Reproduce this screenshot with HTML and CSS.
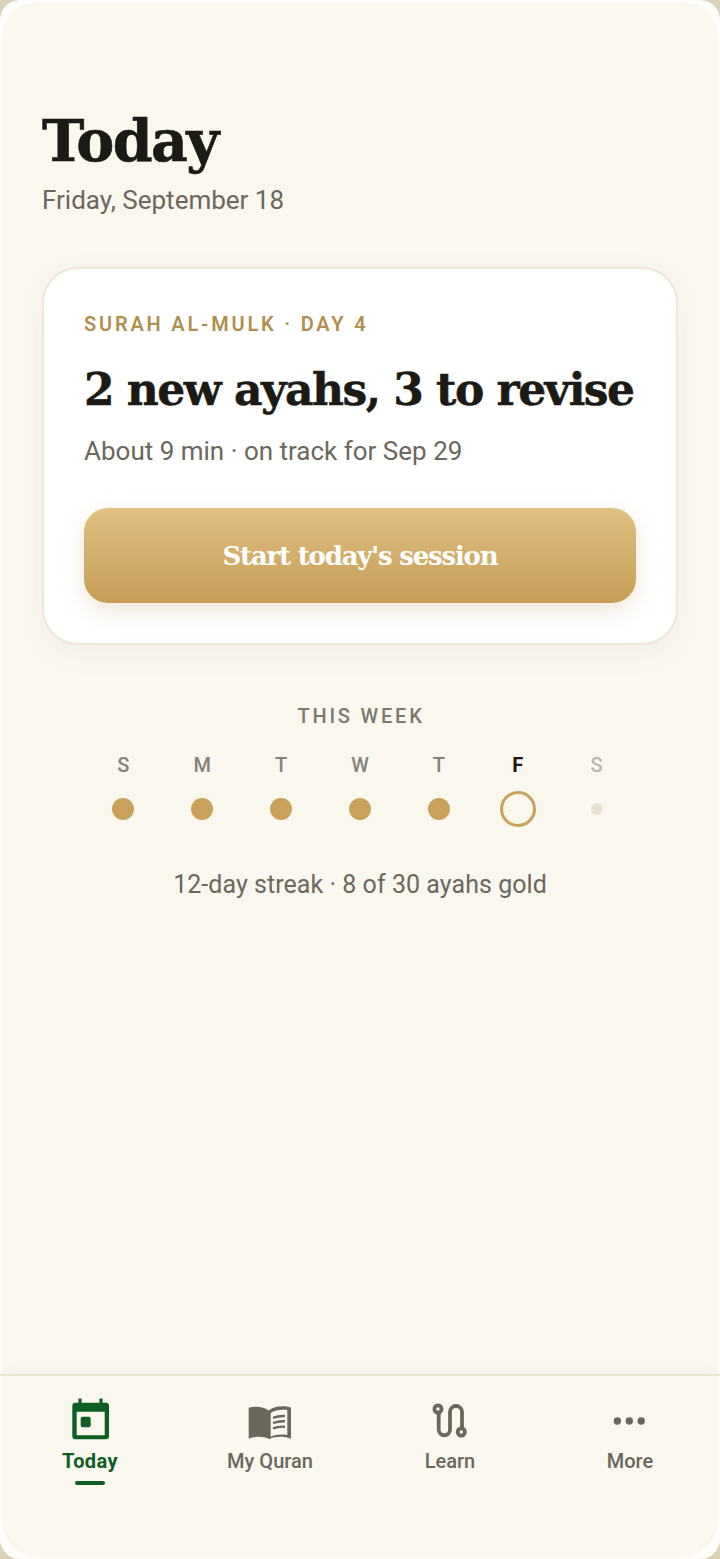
FILE: index.html
```html
<!DOCTYPE html>
<html lang="en">

<head>
    <meta charset="UTF-8" />
    <title>Today</title>
    <link rel="stylesheet" href="styles.css">
</head>

<body>
    <div class="frame">
        <div class="screen">
            <main class="content">
                <h1>Today</h1>
                <p class="date">Friday, September 18</p>

                <section class="card">
                    <p class="eyebrow">SURAH AL-MULK · DAY 4</p>
                    <h2>2 new ayahs, 3 to revise</h2>
                    <p class="eta">About 9 min · on track for Sep 29</p>
                    <button type="button">Start today's session</button>
                </section>

                <section class="week">
                    <p class="week-title">THIS WEEK</p>
                    <div class="days">
                        <div class="day"><span>S</span><i class="dot done"></i></div>
                        <div class="day"><span>M</span><i class="dot done"></i></div>
                        <div class="day"><span>T</span><i class="dot done"></i></div>
                        <div class="day"><span>W</span><i class="dot done"></i></div>
                        <div class="day"><span>T</span><i class="dot done"></i></div>
                        <div class="day today"><span>F</span><i class="dot current"></i></div>
                        <div class="day later"><span>S</span><i class="dot future"></i></div>
                    </div>
                    <p class="streak">12-day streak · 8 of 30 ayahs gold</p>
                </section>
            </main>

            <nav class="tabs">
                <a class="tab active">
                    <svg viewBox="0 0 48 48" width="48" height="48">
                        <path fill-rule="evenodd" fill="currentColor" d="M12.4 2.6h3.2v4.2h17.8V2.6h3.2v4.2h3.4a3 3 0 0 1 3 3v30.5a3 3 0 0 1-3 3H9.3a3 3 0 0 1-3-3V9.800a3 3 0 0 1 3-3h3.100zM10.700 15.700v23.600h28V15.700z" />
                        <rect x="14.700" y="20.700" width="10" height="10.600" rx="2" fill="currentColor" />
                    </svg>
                    <span>Today</span>
                </a>
                <a class="tab">
                    <svg viewBox="0 0 48 48" width="48" height="48">
                        <path fill-rule="evenodd" fill="currentColor" d="M2.700 11.800C9 10 16.500 10 22.800 14.600C29 10 38 9.300 45 11.800V42.700C38 40.200 29 40.200 23.400 43C17 40.200 9 40.200 2.700 42.700zM24.700 17V40.700C29 38.600 36 38.100 41.300 39V14C36 13.200 29 13.800 24.700 17z" />
                        <path fill="none" stroke="currentColor" stroke-width="2.400" d="M27 21.800C31 20.200 35 19.800 39 20M27 27C31 25.500 35 25 39 25.300M27 32.400C31 30.900 35 30.400 39 30.700" />
                    </svg>
                    <span>My Quran</span>
                </a>
                <a class="tab">
                    <svg viewBox="0 0 48 48" width="48" height="48" fill="none" stroke="currentColor" stroke-width="3.800">
                        <circle cx="12" cy="13" r="3.600" />
                        <circle cx="35.300" cy="36" r="3.600" />
                        <path stroke-linecap="round" d="M12.700 17V33.600a5.650 5.650 0 0 0 11.300 0V16a6 6 0 0 1 12 0V32" />
                    </svg>
                    <span>Learn</span>
                </a>
                <a class="tab">
                    <svg viewBox="0 0 48 48" width="48" height="48" fill="currentColor">
                        <circle cx="11.400" cy="25" r="3.700" />
                        <circle cx="23.300" cy="25" r="3.700" />
                        <circle cx="35.200" cy="25" r="3.700" />
                    </svg>
                    <span>More</span>
                </a>
            </nav>
        </div>
    </div>
</body>

</html>
```

FILE: styles.css
```css
* {
    box-sizing: border-box;
}

html,
body {
    height: 100%;
}

body {
    margin: 0;
    background: #d9d3b8;
    font-family: Roboto, sans-serif;
    color: #6b675c;
}

p,
h1,
h2 {
    margin: 0;
}

.frame {
    height: 100%;
    padding: 2px;
    background: #fffdf9;
    border-radius: 20px;
}

.screen {
    height: 100%;
    display: flex;
    flex-direction: column;
    background: #faf7ef;
    border-radius: 36px;
}

.content {
    flex: 1;
    padding: 103px 40px 0;
}

h1 {
    font-family: "DejaVu Serif", serif;
    font-size: 57px;
    line-height: 72px;
    font-weight: 700;
    letter-spacing: -1.600px;
    -webkit-text-stroke: 0.6px #1c1a15;
    color: #1c1a15;
}

.date {
    margin-top: 6px;
    font-size: 26px;
    line-height: 34px;
}

.card {
    margin-top: 50px;
    padding: 42px 40px 40px;
    background: #fff;
    border: 2px solid #efe7d5;
    border-radius: 36px;
    box-shadow: 0 8px 32px rgba(120, 100, 50, 0.05);
}

.eyebrow {
    font-size: 20px;
    line-height: 26px;
    font-weight: 600;
    letter-spacing: 2.800px;
    color: #b08f4f;
}

h2 {
    margin-top: 22px;
    font-family: "DejaVu Serif", serif;
    font-size: 44px;
    line-height: 62px;
    font-weight: 700;
    letter-spacing: -1.530px;
    -webkit-text-stroke: 0.5px #1c1a15;
    white-space: nowrap;
    color: #1c1a15;
}

.eta {
    margin-top: 13px;
    font-size: 26px;
    line-height: 34px;
}

.card button {
    display: block;
    width: 100%;
    height: 95px;
    margin-top: 40px;
    border: none;
    border-radius: 24px;
    background: linear-gradient(#e0c083, #c59d56);
    box-shadow: 0 8px 24px rgba(170, 130, 60, 0.2);
    color: #fff;
    font-family: "DejaVu Serif", serif;
    font-size: 26px;
    font-weight: 700;
    letter-spacing: -1.200px;
}

.week {
    padding: 0 42px;
    margin-top: 58px;
    text-align: center;
}

.week-title {
    font-size: 20px;
    line-height: 26px;
    font-weight: 500;
    letter-spacing: 2.800px;
    text-indent: 2px;
    color: #7d796d;
}

.days {
    display: grid;
    grid-template-columns: repeat(7, 1fr);
    margin-top: 23px;
}

.day {
    display: flex;
    flex-direction: column;
    align-items: center;
}

.day span {
    font-size: 20px;
    line-height: 26px;
    font-weight: 500;
    color: #85817a;
}

.day.today span {
    font-weight: 700;
    color: #1c1a15;
}

.day.later span {
    color: #b9b6ae;
}

.dot {
    display: block;
    border-radius: 50%;
}

.dot.done {
    width: 22px;
    height: 22px;
    margin: 20px 0 13px;
    background: #c9a15a;
}

.dot.current {
    width: 36px;
    height: 36px;
    margin: 13px 0 6px;
    border: 3px solid #c9a15a;
}

.dot.future {
    width: 12px;
    height: 12px;
    margin: 25px 0 18px;
    background: #e9e2d4;
}

.streak {
    margin-top: 35px;
    font-size: 25px;
    line-height: 34px;
    letter-spacing: 0.050px;
}

.tabs {
    display: grid;
    grid-template-columns: repeat(4, 1fr);
    height: 183px;
    margin: 0 -2px;
    padding-top: 20px;
    border-top: 2px solid #e8e4d4;
    box-shadow: 0 -4px 16px rgba(120, 100, 50, 0.03);
}

.tab {
    display: flex;
    flex-direction: column;
    align-items: center;
    font-size: 20px;
    line-height: 26px;
    font-weight: 500;
}

.tab svg {
    display: block;
    margin-bottom: 4px;
}

.tab.active {
    color: #0f5e26;
    font-weight: 700;
    letter-spacing: 0.400px;
}

.tab.active::after {
    content: "";
    width: 30px;
    height: 4px;
    margin-top: 7px;
    border-radius: 2px;
    background: currentColor;
}
```
